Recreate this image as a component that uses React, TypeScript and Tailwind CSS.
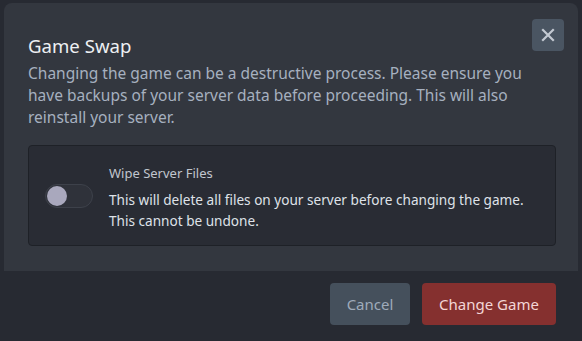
export default function App() {
  return (
    <div
      className="w-[582px] h-[341px] bg-[#272a32] flex flex-col overflow-hidden"
      style={{ fontFamily: '"Noto Sans", "Open Sans", sans-serif' }}
    >
      {/* modal body */}
      <div className="mt-[3px] mx-[4px] h-[268px] bg-[#33373f] rounded-t-lg px-6 pt-4 flex flex-col">
        <div className="flex justify-between items-start">
          <h2 className="text-[18.6px] leading-[26px] text-[#eef0f3] mt-[14px]">Game Swap</h2>
          <button className="w-8 h-8 mr-[-10px] rounded bg-[#4a5562] flex items-center justify-center">
            <svg width="14" height="14" viewBox="0 0 14 14" fill="none" stroke="#c3c9d2" strokeWidth="2.2" strokeLinecap="square">
              <path d="M2 2 L12 12 M12 2 L2 12" />
            </svg>
          </button>
        </div>
        <p className="mt-[3px] text-[15.5px] leading-[22px] text-[#a6b0bf] pr-4">
          Changing the game can be a destructive process. Please ensure you have backups of your server data before proceeding. This will also reinstall your server.
        </p>
        <div className="mt-[17px] mr-[-2px] h-[101px] bg-[#292c34] border border-[#1e2127] rounded flex items-center pl-4">
          <div className="w-12 h-6 rounded-full bg-[#2f323a] border border-[#3d414a] flex items-center px-[1px] mt-[1px]">
            <div className="w-5 h-5 rounded-full bg-[#a9a8bd]" />
          </div>
          <div className="ml-4 flex flex-col mt-[4px]">
            <span className="text-[13px] leading-[18px] text-[#c1c6ce]">Wipe Server Files</span>
            <span className="mt-[7px] text-[13.6px] leading-[21px] text-[#dfe2e8]">
              This will delete all files on your server before changing the game.
              <br />
              This cannot be undone.
            </span>
          </div>
        </div>
      </div>
      {/* footer */}
      <div className="flex justify-end gap-3 pr-[26px] pt-[12px]">
        <button className="w-20 h-[42px] rounded bg-[#45505c] text-[15px] text-[#9fabba]">Cancel</button>
        <button className="w-[134px] h-[42px] rounded bg-[#85302f] text-[15px] text-[#f3d6d6]">Change Game</button>
      </div>
    </div>
  );
}
